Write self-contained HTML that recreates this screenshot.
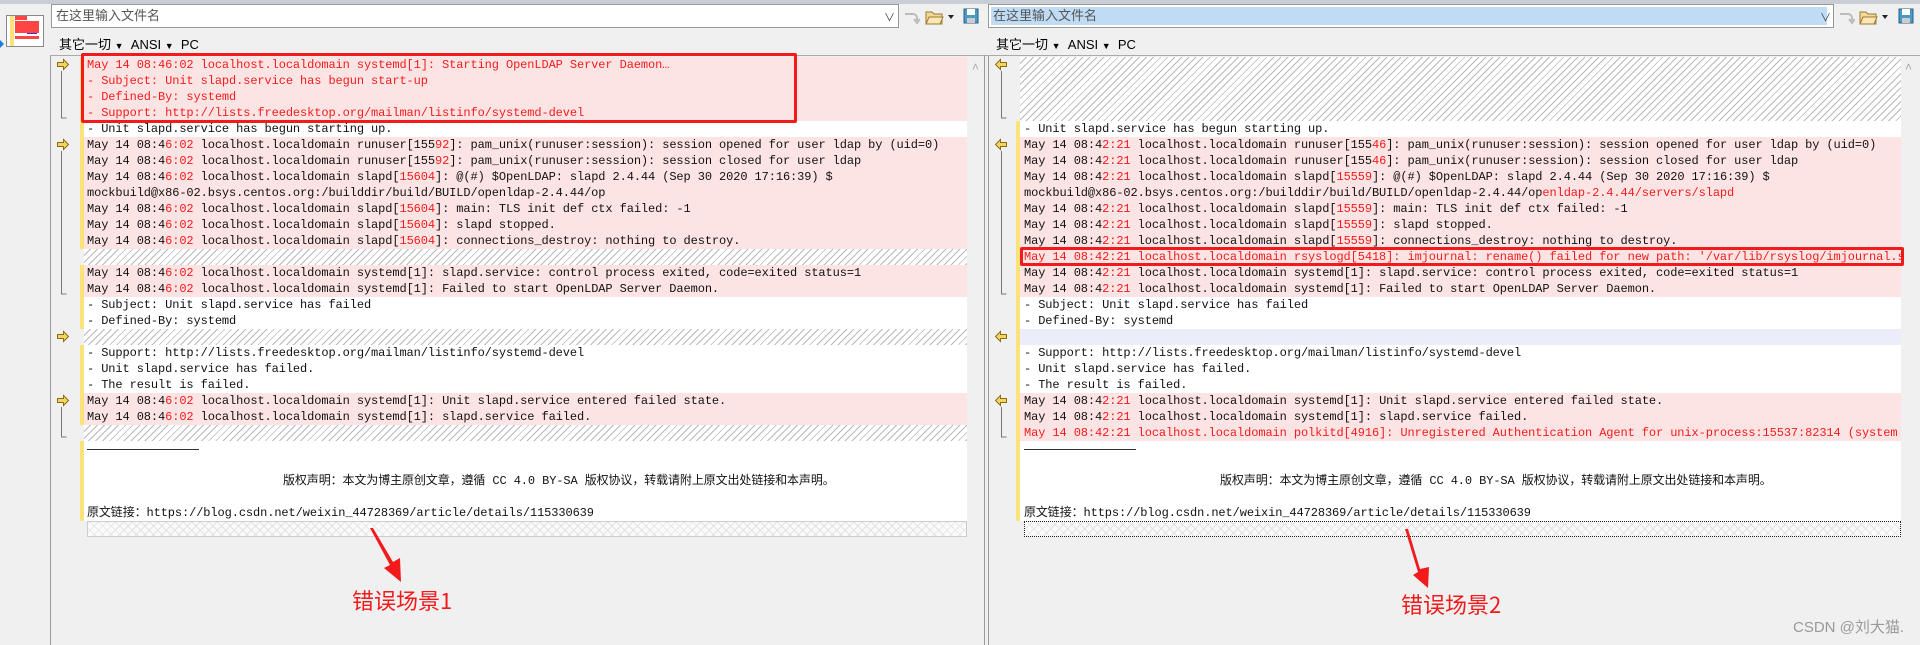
<!DOCTYPE html>
<html><head><meta charset="utf-8"><style>
*{margin:0;padding:0;box-sizing:border-box}
body{width:1920px;height:645px;background:#f0f0f0;position:relative;overflow:hidden;font-family:"Liberation Sans","Noto Sans CJK SC",sans-serif}
.abs{position:absolute}
.row{position:absolute;height:16px;line-height:16px;font-family:"Liberation Mono","Noto Sans CJK SC",monospace;font-size:12px;letter-spacing:-0.1px;white-space:pre;overflow:hidden;color:#111}
.p{background:#fde4e4}.w{background:#fff}.lav{background:#ececfb}
.h{background:repeating-linear-gradient(135deg,#fff 0 4px,#b8b8b8 4px 5px)}
.r{color:#f41c1c}
.yb{position:absolute;width:4px;background:#fbe27a}
.cj{font-family:"Liberation Mono","Noto Sans CJK SC",monospace}
.tb{position:absolute;top:34px;font-size:13px;color:#000}
.inp{position:absolute;top:4px;height:24px;background:#fff;border:1px solid #999;font-size:13px;color:#555;line-height:22px;padding-left:4px}
.vl{position:absolute;width:1px;background:#777}
.tk{position:absolute;height:1px;width:5px;background:#777}
</style></head><body>
<div class="abs" style="left:0;top:0;width:1920px;height:4px;background:#c9ced6"></div>
<!-- sidebar icon -->
<div class="abs" style="left:6px;top:15px;width:38px;height:32px;border:1px solid #888;background:#fff"></div>
<div class="abs" style="left:10px;top:16px;width:4px;height:30px;background:#fbe27a"></div>
<div class="abs" style="left:15px;top:16px;width:12px;height:4px;background:#f44"></div>
<div class="abs" style="left:15px;top:21px;width:24px;height:12px;background:#f44"></div>
<div class="abs" style="left:15px;top:36px;width:24px;height:3px;background:#f44"></div>
<div class="abs" style="left:27px;top:33px;width:10px;height:1px;background:#33c"></div>
<div class="abs" style="left:0;top:40px;width:0;height:0;border-left:4px solid #1a7bd8;border-top:4px solid transparent;border-bottom:4px solid transparent"></div>

<!-- left header -->
<div class="inp" style="left:51px;width:848px">在这里输入文件名</div>
<div class="abs" style="left:884px;top:9px;font-size:11px;color:#444">&#8744;</div>
<svg class="abs" style="left:902px;top:8px" width="18" height="18"><path d="M3 6h8a4 4 0 0 1 4 4v3M12 11l3 4 3-4" fill="none" stroke="#bbb" stroke-width="2"/></svg>
<svg class="abs" style="left:925px;top:9px" width="34" height="16"><path d="M1 3h6l2 2h8v10H1z" fill="#f4d89a" stroke="#9a7a30"/><path d="M1 15l3-7h14l-3 7z" fill="#fbe6b4" stroke="#9a7a30"/><path d="M23 6h6l-3 4z" fill="#222"/></svg>
<svg class="abs" style="left:963px;top:8px" width="16" height="16"><rect x="1" y="1" width="14" height="14" fill="#4a9ac8" stroke="#2a5f80"/><rect x="4" y="1" width="8" height="6" fill="#fff"/><rect x="4" y="10" width="8" height="5" fill="#ccc"/></svg>
<div class="tb" style="left:59px">其它一切 <span style="font-size:9px">▼</span>&nbsp; ANSI <span style="font-size:9px">▼</span>&nbsp; PC</div>

<!-- right header -->
<div class="inp" style="left:988px;width:846px;padding:2px"><div style="background:#c0dbf4;height:18px;width:836px;line-height:18px;padding-left:2px">在这里输入文件名</div></div>
<div class="abs" style="left:1820px;top:9px;font-size:11px;color:#444">&#8744;</div>
<svg class="abs" style="left:1837px;top:8px" width="18" height="18"><path d="M3 6h8a4 4 0 0 1 4 4v3M12 11l3 4 3-4" fill="none" stroke="#bbb" stroke-width="2"/></svg>
<svg class="abs" style="left:1859px;top:9px" width="34" height="16"><path d="M1 3h6l2 2h8v10H1z" fill="#f4d89a" stroke="#9a7a30"/><path d="M1 15l3-7h14l-3 7z" fill="#fbe6b4" stroke="#9a7a30"/><path d="M23 6h6l-3 4z" fill="#222"/></svg>
<svg class="abs" style="left:1898px;top:8px" width="16" height="16"><rect x="1" y="1" width="14" height="14" fill="#4a9ac8" stroke="#2a5f80"/><rect x="4" y="1" width="8" height="6" fill="#fff"/><rect x="4" y="10" width="8" height="5" fill="#ccc"/></svg>
<div class="tb" style="left:996px">其它一切 <span style="font-size:9px">▼</span>&nbsp; ANSI <span style="font-size:9px">▼</span>&nbsp; PC</div>

<!-- panel borders -->
<div class="abs" style="left:50px;top:55px;width:1px;height:590px;background:#999"></div>
<div class="abs" style="left:50px;top:55px;width:938px;height:1px;background:#aaa"></div>
<div class="abs" style="left:984px;top:55px;width:1px;height:590px;background:#999"></div>
<div class="abs" style="left:988px;top:55px;width:1px;height:590px;background:#999"></div>
<div class="abs" style="left:988px;top:55px;width:932px;height:1px;background:#aaa"></div>
<div class="abs" style="left:972px;top:60px;font-size:12px;color:#aaa">&#708;</div>
<div class="abs" style="left:1905px;top:60px;font-size:12px;color:#aaa">&#708;</div>

<!-- LEFT rows: left 84 width 883, text pad 3 -->
<div style="position:absolute;left:84px;top:57px;width:883px">
<div class="row p r" style="top:0;left:0;right:0;padding-left:3px">May 14 08:46:02 localhost.localdomain systemd[1]: Starting OpenLDAP Server Daemon…</div>
<div class="row p r" style="top:16px;left:0;right:0;padding-left:3px">- Subject: Unit slapd.service has begun start-up</div>
<div class="row p r" style="top:32px;left:0;right:0;padding-left:3px">- Defined-By: systemd</div>
<div class="row p r" style="top:48px;left:0;right:0;padding-left:3px">- Support: http://lists.freedesktop.org/mailman/listinfo/systemd-devel</div>
<div class="row w" style="top:64px;left:0;right:0;padding-left:3px">- Unit slapd.service has begun starting up.</div>
<div class="row p" style="top:80px;left:0;right:0;padding-left:3px">May 14 08:4<span class="r">6:02</span> localhost.localdomain runuser[155<span class="r">92</span>]: pam_unix(runuser:session): session opened for user ldap by (uid=0)</div>
<div class="row p" style="top:96px;left:0;right:0;padding-left:3px">May 14 08:4<span class="r">6:02</span> localhost.localdomain runuser[155<span class="r">92</span>]: pam_unix(runuser:session): session closed for user ldap</div>
<div class="row p" style="top:112px;left:0;right:0;padding-left:3px">May 14 08:4<span class="r">6:02</span> localhost.localdomain slapd[<span class="r">15604</span>]: @(#) $OpenLDAP: slapd 2.4.44 (Sep 30 2020 17:16:39) $</div>
<div class="row p" style="top:128px;left:0;right:0;padding-left:3px">mockbuild@x86-02.bsys.centos.org:/builddir/build/BUILD/openldap-2.4.44/op</div>
<div class="row p" style="top:144px;left:0;right:0;padding-left:3px">May 14 08:4<span class="r">6:02</span> localhost.localdomain slapd[<span class="r">15604</span>]: main: TLS init def ctx failed: -1</div>
<div class="row p" style="top:160px;left:0;right:0;padding-left:3px">May 14 08:4<span class="r">6:02</span> localhost.localdomain slapd[<span class="r">15604</span>]: slapd stopped.</div>
<div class="row p" style="top:176px;left:0;right:0;padding-left:3px">May 14 08:4<span class="r">6:02</span> localhost.localdomain slapd[<span class="r">15604</span>]: connections_destroy: nothing to destroy.</div>
<div class="row h" style="top:192px;left:0;right:0"></div>
<div class="row p" style="top:208px;left:0;right:0;padding-left:3px">May 14 08:4<span class="r">6:02</span> localhost.localdomain systemd[1]: slapd.service: control process exited, code=exited status=1</div>
<div class="row p" style="top:224px;left:0;right:0;padding-left:3px">May 14 08:4<span class="r">6:02</span> localhost.localdomain systemd[1]: Failed to start OpenLDAP Server Daemon.</div>
<div class="row w" style="top:240px;left:0;right:0;padding-left:3px">- Subject: Unit slapd.service has failed</div>
<div class="row w" style="top:256px;left:0;right:0;padding-left:3px">- Defined-By: systemd</div>
<div class="row h" style="top:272px;left:0;right:0"></div>
<div class="row w" style="top:288px;left:0;right:0;padding-left:3px">- Support: http://lists.freedesktop.org/mailman/listinfo/systemd-devel</div>
<div class="row w" style="top:304px;left:0;right:0;padding-left:3px">- Unit slapd.service has failed.</div>
<div class="row w" style="top:320px;left:0;right:0;padding-left:3px">- The result is failed.</div>
<div class="row p" style="top:336px;left:0;right:0;padding-left:3px">May 14 08:4<span class="r">6:02</span> localhost.localdomain systemd[1]: Unit slapd.service entered failed state.</div>
<div class="row p" style="top:352px;left:0;right:0;padding-left:3px">May 14 08:4<span class="r">6:02</span> localhost.localdomain systemd[1]: slapd.service failed.</div>
<div class="row h" style="top:368px;left:0;right:0"></div>
<div class="row w" style="top:384px;left:0;right:0;height:80px"></div>
<div class="abs" style="top:392px;left:3px;width:112px;height:1px;background:#333"></div>
<div class="row" style="top:416px;left:199px">版权声明：本文为博主原创文章，遵循 CC 4.0 BY-SA 版权协议，转载请附上原文出处链接和本声明。</div>
<div class="row" style="top:448px;left:3px">原文链接：https://blog.csdn.net/weixin_44728369/article/details/115330639</div>
<div class="abs" style="top:464px;left:3px;width:880px;height:16px;border:1px solid #ccc;background:repeating-linear-gradient(45deg,transparent 0 5px,#e2e2e2 5px 6px),repeating-linear-gradient(-45deg,#fafafa 0 5px,#e2e2e2 5px 6px)"></div>
</div>
<!-- left yellow bars -->
<div class="yb" style="left:80px;top:57px;height:192px"></div>
<div class="yb" style="left:80px;top:265px;height:64px"></div>
<div class="yb" style="left:80px;top:345px;height:80px"></div>
<div class="yb" style="left:80px;top:441px;height:80px"></div>
<!-- left red box -->
<div class="abs" style="left:81px;top:53px;width:716px;height:70px;border:3px solid #f21a1a;border-radius:2px"></div>

<!-- RIGHT rows -->
<div style="position:absolute;left:1020px;top:57px;width:881px">
<div class="row h" style="top:0;left:0;right:0;height:64px"></div>
<div class="row w" style="top:64px;left:0;right:0;padding-left:4px">- Unit slapd.service has begun starting up.</div>
<div class="row p" style="top:80px;left:0;right:0;padding-left:4px">May 14 08:4<span class="r">2:21</span> localhost.localdomain runuser[155<span class="r">46</span>]: pam_unix(runuser:session): session opened for user ldap by (uid=0)</div>
<div class="row p" style="top:96px;left:0;right:0;padding-left:4px">May 14 08:4<span class="r">2:21</span> localhost.localdomain runuser[155<span class="r">46</span>]: pam_unix(runuser:session): session closed for user ldap</div>
<div class="row p" style="top:112px;left:0;right:0;padding-left:4px">May 14 08:4<span class="r">2:21</span> localhost.localdomain slapd[<span class="r">15559</span>]: @(#) $OpenLDAP: slapd 2.4.44 (Sep 30 2020 17:16:39) $</div>
<div class="row p" style="top:128px;left:0;right:0;padding-left:4px">mockbuild@x86-02.bsys.centos.org:/builddir/build/BUILD/openldap-2.4.44/op<span class="r">enldap-2.4.44/servers/slapd</span></div>
<div class="row p" style="top:144px;left:0;right:0;padding-left:4px">May 14 08:4<span class="r">2:21</span> localhost.localdomain slapd[<span class="r">15559</span>]: main: TLS init def ctx failed: -1</div>
<div class="row p" style="top:160px;left:0;right:0;padding-left:4px">May 14 08:4<span class="r">2:21</span> localhost.localdomain slapd[<span class="r">15559</span>]: slapd stopped.</div>
<div class="row p" style="top:176px;left:0;right:0;padding-left:4px">May 14 08:4<span class="r">2:21</span> localhost.localdomain slapd[<span class="r">15559</span>]: connections_destroy: nothing to destroy.</div>
<div class="row p r" style="top:192px;left:0;right:0;padding-left:4px">May 14 08:42:21 localhost.localdomain rsyslogd[5418]: imjournal: rename() failed for new path: '/var/lib/rsyslog/imjournal.state'</div>
<div class="row p" style="top:208px;left:0;right:0;padding-left:4px">May 14 08:4<span class="r">2:21</span> localhost.localdomain systemd[1]: slapd.service: control process exited, code=exited status=1</div>
<div class="row p" style="top:224px;left:0;right:0;padding-left:4px">May 14 08:4<span class="r">2:21</span> localhost.localdomain systemd[1]: Failed to start OpenLDAP Server Daemon.</div>
<div class="row w" style="top:240px;left:0;right:0;padding-left:4px">- Subject: Unit slapd.service has failed</div>
<div class="row w" style="top:256px;left:0;right:0;padding-left:4px">- Defined-By: systemd</div>
<div class="row lav" style="top:272px;left:0;right:0"></div>
<div class="row w" style="top:288px;left:0;right:0;padding-left:4px">- Support: http://lists.freedesktop.org/mailman/listinfo/systemd-devel</div>
<div class="row w" style="top:304px;left:0;right:0;padding-left:4px">- Unit slapd.service has failed.</div>
<div class="row w" style="top:320px;left:0;right:0;padding-left:4px">- The result is failed.</div>
<div class="row p" style="top:336px;left:0;right:0;padding-left:4px">May 14 08:4<span class="r">2:21</span> localhost.localdomain systemd[1]: Unit slapd.service entered failed state.</div>
<div class="row p" style="top:352px;left:0;right:0;padding-left:4px">May 14 08:4<span class="r">2:21</span> localhost.localdomain systemd[1]: slapd.service failed.</div>
<div class="row p r" style="top:368px;left:0;right:0;padding-left:4px">May 14 08:42:21 localhost.localdomain polkitd[4916]: Unregistered Authentication Agent for unix-process:15537:82314 (system bus name :1.23)</div>
<div class="row w" style="top:384px;left:0;right:0;height:80px"></div>
<div class="abs" style="top:392px;left:4px;width:112px;height:1px;background:#333"></div>
<div class="row" style="top:416px;left:200px">版权声明：本文为博主原创文章，遵循 CC 4.0 BY-SA 版权协议，转载请附上原文出处链接和本声明。</div>
<div class="row" style="top:448px;left:4px">原文链接：https://blog.csdn.net/weixin_44728369/article/details/115330639</div>
<div class="abs" style="top:464px;left:4px;width:877px;height:16px;border:1px dotted #222;background:repeating-linear-gradient(45deg,transparent 0 5px,#e2e2e2 5px 6px),repeating-linear-gradient(-45deg,#fafafa 0 5px,#e2e2e2 5px 6px)"></div>
</div>
<div class="yb" style="left:1016px;top:121px;height:400px"></div>
<div class="abs" style="left:1020px;top:247px;width:884px;height:19px;border:3px solid #f21a1a;border-radius:2px"></div>

<!-- gutter arrows & brackets -->
<svg class="abs" style="left:0;top:0" width="1920" height="645">
<g fill="#f5d55a" stroke="#8a6d1a" stroke-width="1">
<path d="M57.5 62.5h6v-3l5 5-5 5v-3h-6z"/>
<path d="M57.5 142.5h6v-3l5 5-5 5v-3h-6z"/>
<path d="M57.5 334.5h6v-3l5 5-5 5v-3h-6z"/>
<path d="M57.5 398.5h6v-3l5 5-5 5v-3h-6z"/>
<path d="M1006.5 62.5h-6v-3l-5 5 5 5v-3h6z"/>
<path d="M1006.5 142.5h-6v-3l-5 5 5 5v-3h6z"/>
<path d="M1006.5 334.5h-6v-3l-5 5 5 5v-3h6z"/>
<path d="M1006.5 398.5h-6v-3l-5 5 5 5v-3h6z"/>
</g>
<g fill="none" stroke="#777" stroke-width="1">
<path d="M61.5 71v47h5"/><path d="M61.5 151v143h5"/><path d="M61.5 407v30h5"/>
<path d="M1001.5 71v47h5"/><path d="M1001.5 151v143h5"/><path d="M1001.5 407v30h5"/>
</g>
<!-- annotation arrows -->
<path d="M370 528 L373 528 L393 562 L400 558 L401 582 L384 568 L390 565 Z" fill="#f21a1a"/>
<path d="M1405 529 L1408 529 L1420 569 L1429 567 L1428 588 L1413 575 L1418 572 Z" fill="#f21a1a"/>
</svg>
<div class="abs" style="left:352px;top:586px;font-size:22px;color:#f21a1a;font-family:'Noto Sans CJK SC',sans-serif;line-height:28px">错误场景1</div>
<div class="abs" style="left:1401px;top:590px;font-size:22px;color:#f21a1a;font-family:'Noto Sans CJK SC',sans-serif;line-height:28px">错误场景2</div>
<div class="abs" style="left:1793px;top:616px;font-size:15px;color:#999;font-family:'Liberation Sans','Noto Sans CJK SC',sans-serif">CSDN @刘大猫.</div>
</body></html>
